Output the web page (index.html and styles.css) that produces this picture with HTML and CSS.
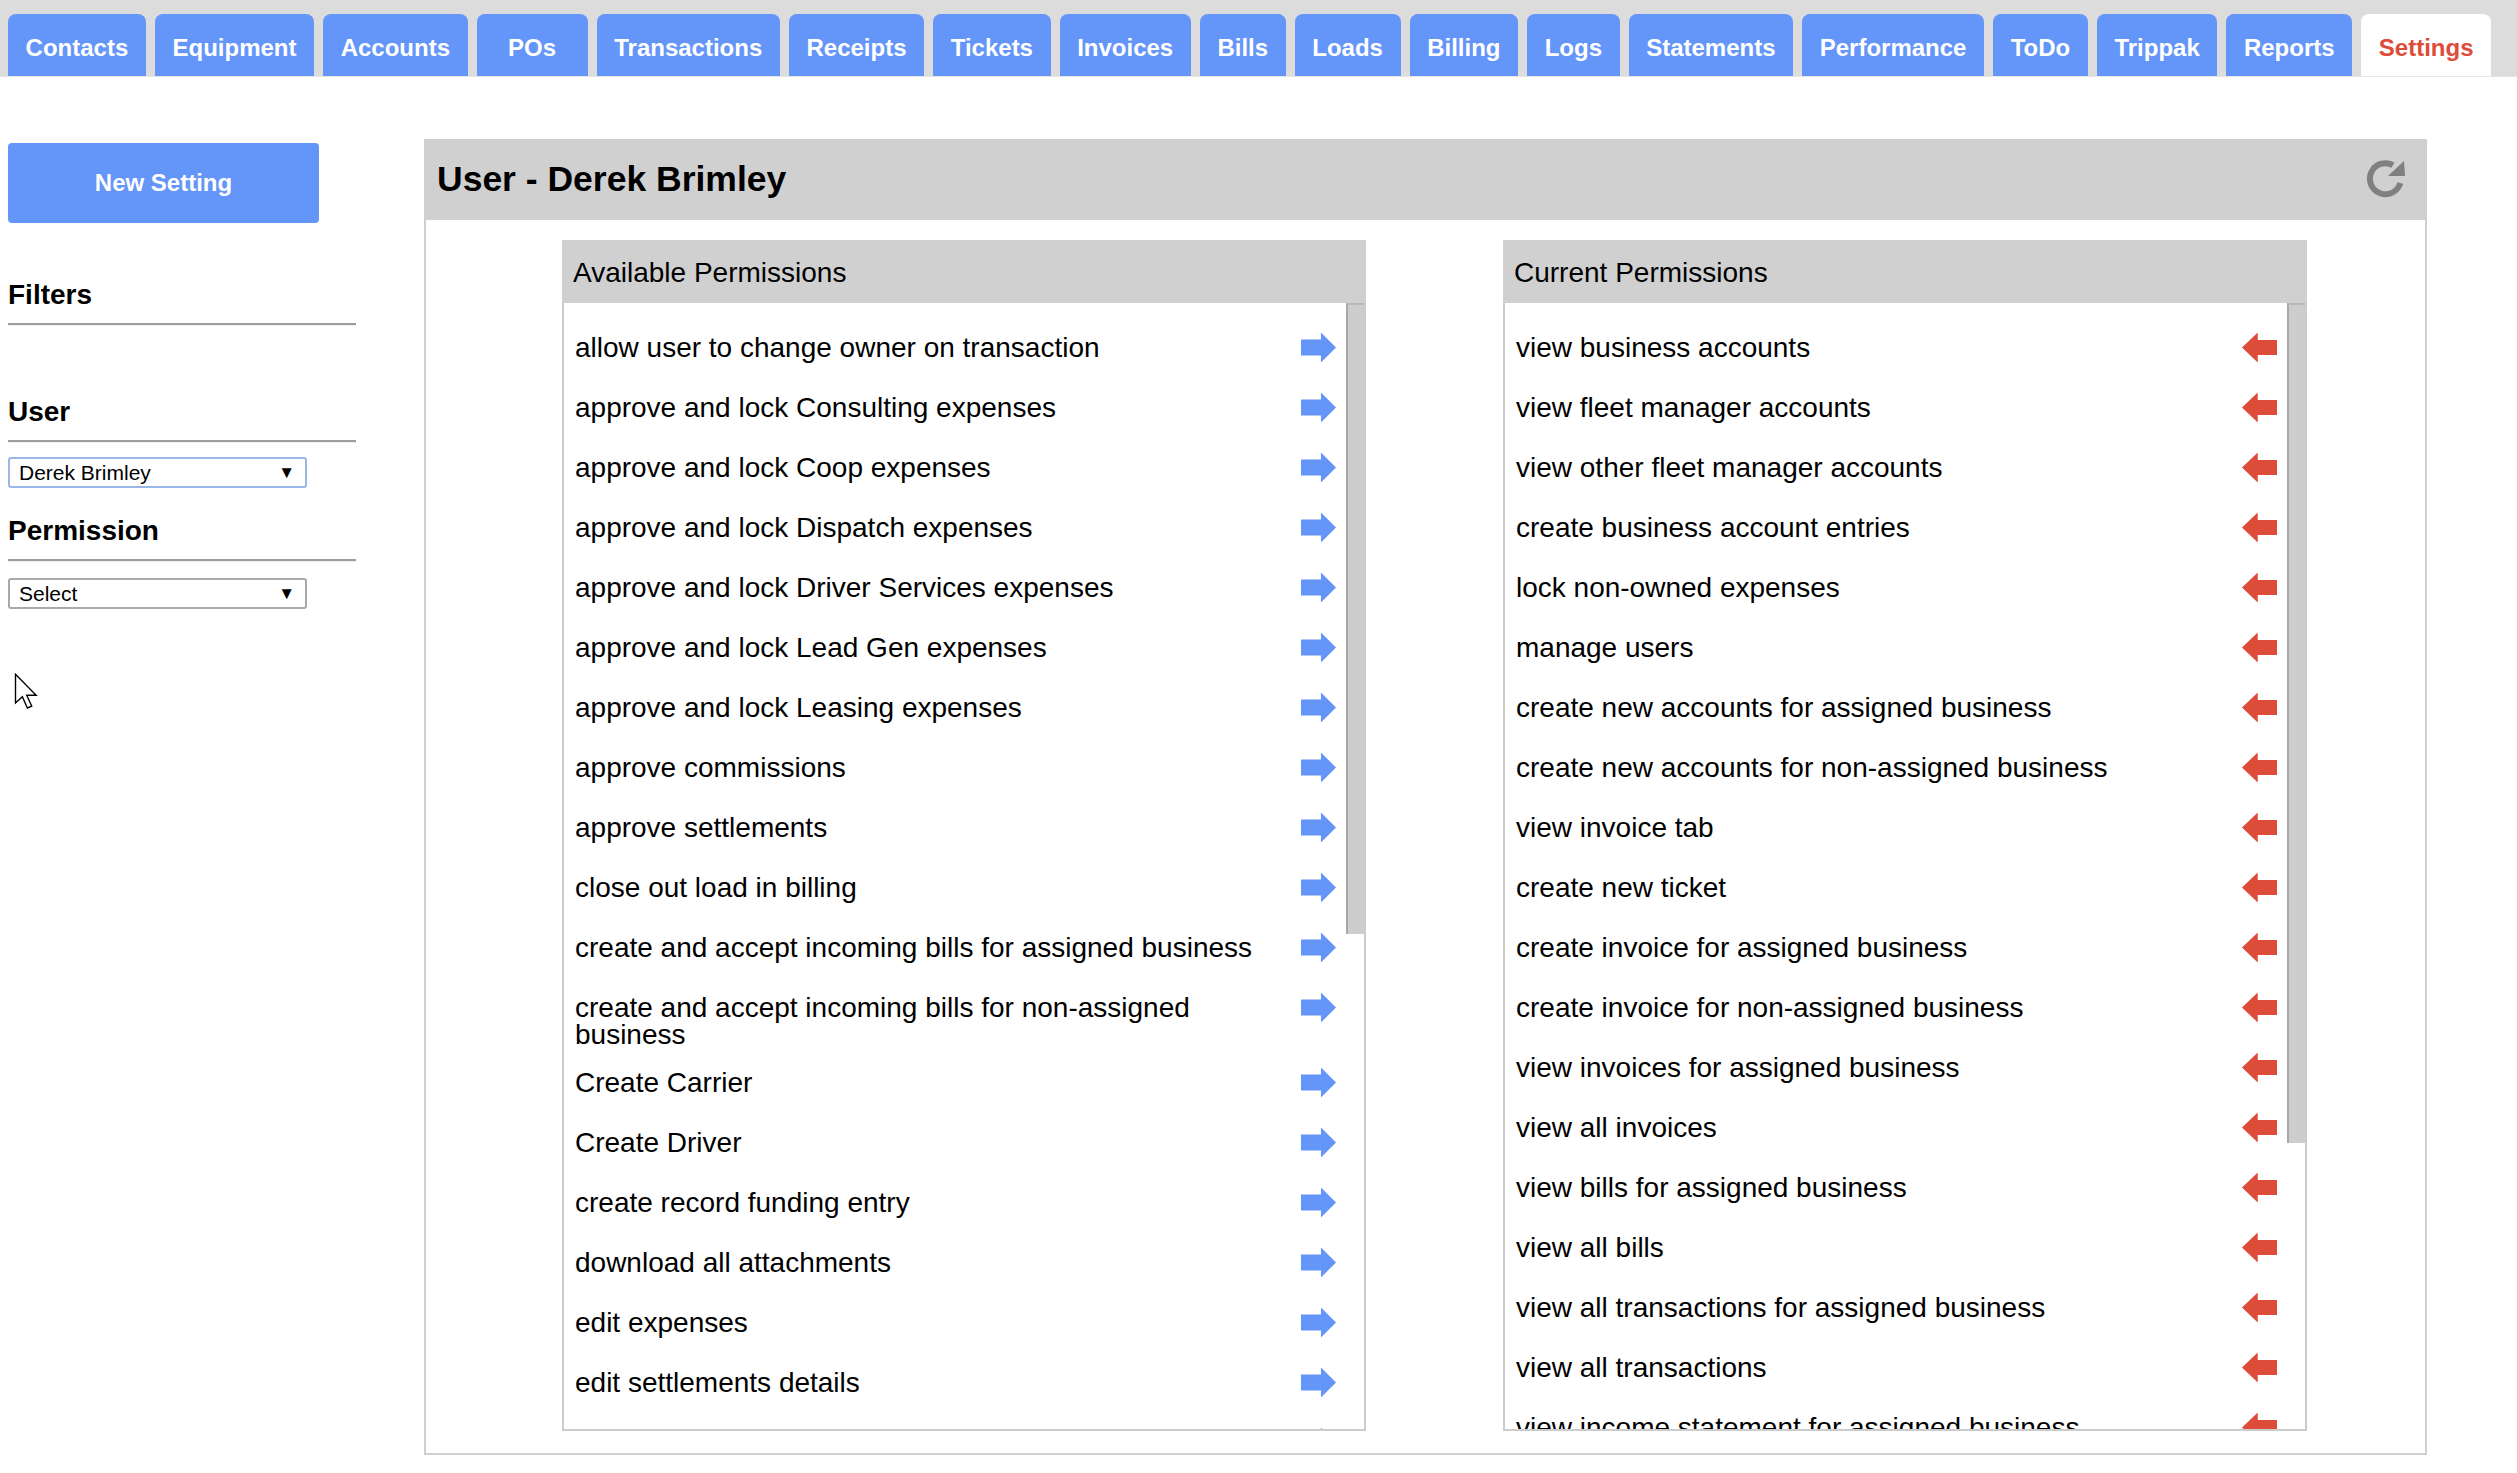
FILE: index.html
```html
<!DOCTYPE html>
<html lang="en">
<head>
<meta charset="utf-8">
<title>Settings</title>
<link rel="stylesheet" href="styles.css">
</head>
<body>
<nav class="tabbar">
  <a class="tab">Contacts</a>
  <a class="tab">Equipment</a>
  <a class="tab">Accounts</a>
  <a class="tab tab-wide">POs</a>
  <a class="tab">Transactions</a>
  <a class="tab">Receipts</a>
  <a class="tab">Tickets</a>
  <a class="tab">Invoices</a>
  <a class="tab">Bills</a>
  <a class="tab">Loads</a>
  <a class="tab">Billing</a>
  <a class="tab">Logs</a>
  <a class="tab">Statements</a>
  <a class="tab">Performance</a>
  <a class="tab">ToDo</a>
  <a class="tab">Trippak</a>
  <a class="tab">Reports</a>
  <a class="tab tab-active">Settings</a>
</nav>

<div class="page">
  <aside class="sidebar">
    <button class="btn-new">New Setting</button>
    <h3 class="side-title side-filters">Filters</h3>
    <hr class="side-rule">
    <h3 class="side-title side-user">User</h3>
    <hr class="side-rule">
    <div class="fake-select fake-select-focus"><span>Derek Brimley</span><span class="caret">&#9660;</span></div>
    <h3 class="side-title side-perm">Permission</h3>
    <hr class="side-rule">
    <div class="fake-select fake-select-2"><span>Select</span><span class="caret">&#9660;</span></div>
  </aside>

  <main class="panel">
    <header class="panel-head">
      <h2 class="panel-title">User - Derek Brimley</h2>
      <svg class="refresh" width="42" height="40" viewBox="0 0 42 40">
        <path d="M29 5.2 A15.5 15.5 0 1 0 36.3 23" fill="none" stroke="#808080" stroke-width="6"/>
        <path d="M24 16 L41 16 L40 1 Z" fill="#808080"/>
      </svg>
    </header>
    <div class="panel-body">
      <section class="perm-box">
        <div class="perm-head">Available Permissions</div>
        <div class="perm-body">
          <div class="perm-list">
            <div class="item"><span class="item-text">allow user to change owner on transaction</span><span class="act"><i class="arrow arrow-add"></i></span></div>
            <div class="item"><span class="item-text">approve and lock Consulting expenses</span><span class="act"><i class="arrow arrow-add"></i></span></div>
            <div class="item"><span class="item-text">approve and lock Coop expenses</span><span class="act"><i class="arrow arrow-add"></i></span></div>
            <div class="item"><span class="item-text">approve and lock Dispatch expenses</span><span class="act"><i class="arrow arrow-add"></i></span></div>
            <div class="item"><span class="item-text">approve and lock Driver Services expenses</span><span class="act"><i class="arrow arrow-add"></i></span></div>
            <div class="item"><span class="item-text">approve and lock Lead Gen expenses</span><span class="act"><i class="arrow arrow-add"></i></span></div>
            <div class="item"><span class="item-text">approve and lock Leasing expenses</span><span class="act"><i class="arrow arrow-add"></i></span></div>
            <div class="item"><span class="item-text">approve commissions</span><span class="act"><i class="arrow arrow-add"></i></span></div>
            <div class="item"><span class="item-text">approve settlements</span><span class="act"><i class="arrow arrow-add"></i></span></div>
            <div class="item"><span class="item-text">close out load in billing</span><span class="act"><i class="arrow arrow-add"></i></span></div>
            <div class="item"><span class="item-text">create and accept incoming bills for assigned business</span><span class="act"><i class="arrow arrow-add"></i></span></div>
            <div class="item"><span class="item-text">create and accept incoming bills for non-assigned business</span><span class="act"><i class="arrow arrow-add"></i></span></div>
            <div class="item"><span class="item-text">Create Carrier</span><span class="act"><i class="arrow arrow-add"></i></span></div>
            <div class="item"><span class="item-text">Create Driver</span><span class="act"><i class="arrow arrow-add"></i></span></div>
            <div class="item"><span class="item-text">create record funding entry</span><span class="act"><i class="arrow arrow-add"></i></span></div>
            <div class="item"><span class="item-text">download all attachments</span><span class="act"><i class="arrow arrow-add"></i></span></div>
            <div class="item"><span class="item-text">edit expenses</span><span class="act"><i class="arrow arrow-add"></i></span></div>
            <div class="item"><span class="item-text">edit settlements details</span><span class="act"><i class="arrow arrow-add"></i></span></div>
            <div class="item"><span class="item-text">export reports</span><span class="act"><i class="arrow arrow-add"></i></span></div>
            <div class="item"><span class="item-text">lock all expenses</span><span class="act"><i class="arrow arrow-add"></i></span></div>
            <div class="item"><span class="item-text">manage business settings</span><span class="act"><i class="arrow arrow-add"></i></span></div>
            <div class="item"><span class="item-text">manage carriers</span><span class="act"><i class="arrow arrow-add"></i></span></div>
          </div>
          <div class="scroll-track"><div class="scroll-thumb" style="height: 631px"></div></div>
        </div>
      </section>

      <section class="perm-box">
        <div class="perm-head">Current Permissions</div>
        <div class="perm-body">
          <div class="perm-list">
            <div class="item"><span class="item-text">view business accounts</span><span class="act"><i class="arrow arrow-remove"></i></span></div>
            <div class="item"><span class="item-text">view fleet manager accounts</span><span class="act"><i class="arrow arrow-remove"></i></span></div>
            <div class="item"><span class="item-text">view other fleet manager accounts</span><span class="act"><i class="arrow arrow-remove"></i></span></div>
            <div class="item"><span class="item-text">create business account entries</span><span class="act"><i class="arrow arrow-remove"></i></span></div>
            <div class="item"><span class="item-text">lock non-owned expenses</span><span class="act"><i class="arrow arrow-remove"></i></span></div>
            <div class="item"><span class="item-text">manage users</span><span class="act"><i class="arrow arrow-remove"></i></span></div>
            <div class="item"><span class="item-text">create new accounts for assigned business</span><span class="act"><i class="arrow arrow-remove"></i></span></div>
            <div class="item"><span class="item-text">create new accounts for non-assigned business</span><span class="act"><i class="arrow arrow-remove"></i></span></div>
            <div class="item"><span class="item-text">view invoice tab</span><span class="act"><i class="arrow arrow-remove"></i></span></div>
            <div class="item"><span class="item-text">create new ticket</span><span class="act"><i class="arrow arrow-remove"></i></span></div>
            <div class="item"><span class="item-text">create invoice for assigned business</span><span class="act"><i class="arrow arrow-remove"></i></span></div>
            <div class="item"><span class="item-text">create invoice for non-assigned business</span><span class="act"><i class="arrow arrow-remove"></i></span></div>
            <div class="item"><span class="item-text">view invoices for assigned business</span><span class="act"><i class="arrow arrow-remove"></i></span></div>
            <div class="item"><span class="item-text">view all invoices</span><span class="act"><i class="arrow arrow-remove"></i></span></div>
            <div class="item"><span class="item-text">view bills for assigned business</span><span class="act"><i class="arrow arrow-remove"></i></span></div>
            <div class="item"><span class="item-text">view all bills</span><span class="act"><i class="arrow arrow-remove"></i></span></div>
            <div class="item"><span class="item-text">view all transactions for assigned business</span><span class="act"><i class="arrow arrow-remove"></i></span></div>
            <div class="item"><span class="item-text">view all transactions</span><span class="act"><i class="arrow arrow-remove"></i></span></div>
            <div class="item"><span class="item-text">view income statement for assigned business</span><span class="act"><i class="arrow arrow-remove"></i></span></div>
            <div class="item"><span class="item-text">view all income statements</span><span class="act"><i class="arrow arrow-remove"></i></span></div>
            <div class="item"><span class="item-text">view receipts for assigned business</span><span class="act"><i class="arrow arrow-remove"></i></span></div>
          </div>
          <div class="scroll-track"><div class="scroll-thumb" style="height: 840px"></div></div>
        </div>
      </section>
    </div>
  </main>
</div>

<svg class="cursor" width="28" height="40" viewBox="0 0 22 32">
  <path d="M1 1 L1 24 L6.5 19 L10.5 28 L14 26.6 L10 17.8 L17.5 17.8 Z" fill="#fff" stroke="#000" stroke-width="1.1" stroke-linejoin="miter"/>
</svg>
</body>
</html>
```

FILE: styles.css
```css
html, body {
  margin: 0;
  padding: 0;
  background: #fff;
}

body {
  font-family: "Liberation Sans", Arial, sans-serif;
  color: #000;
  position: relative;
  min-height: 1473px;
}

/* ---------- tab bar ---------- */
.tabbar {
  display: flex;
  align-items: flex-end;
  gap: 9px;
  height: 77px;
  padding-left: 8px;
  background: #dcdcdc;
  box-sizing: border-box;
  border-bottom: 1px solid #e6e6e6;
}

.tab {
  display: flex;
  align-items: center;
  justify-content: center;
  height: 62px;
  padding: 5px 17.6px 0;
  box-sizing: border-box;
  background: #6495f8;
  color: #fff;
  font-weight: bold;
  font-size: 24px;
  border-radius: 8px 8px 0 0;
  white-space: nowrap;
  cursor: pointer;
}

.tab-wide {
  min-width: 111px;
}

.tab-active {
  background: #fff;
  color: #dd4b39;
}

/* ---------- page ---------- */
.page {
  display: flex;
  align-items: flex-start;
  padding: 62px 0 0 8px;
}

.sidebar {
  width: 348px;
  margin-right: 68px;
  display: flex;
  flex-direction: column;
}

.btn-new {
  width: 311px;
  height: 80px;
  margin-top: 4px;
  border: 0;
  border-radius: 4px;
  background: #6495f8;
  color: #fff;
  font-family: "Liberation Sans", Arial, sans-serif;
  font-weight: bold;
  font-size: 24px;
  cursor: pointer;
}

.side-title {
  margin: 0;
  font-size: 28px;
  line-height: 34px;
  font-weight: bold;
}

.side-filters { margin-top: 55px; }
.side-user { margin-top: 69px; }
.side-perm { margin-top: 26px; }

.side-rule {
  width: 100%;
  height: 0;
  margin: 11px 0 0;
  border: 0;
  border-top: 2px solid #9d9d9d;
  border-bottom: 1px solid #eeeeee;
}

.fake-select {
  display: flex;
  align-items: center;
  justify-content: space-between;
  width: 299px;
  height: 31px;
  margin-top: 14px;
  padding: 0 10px 0 9px;
  box-sizing: border-box;
  border: 2px solid #a9a9a9;
  border-radius: 3px;
  font-size: 21px;
  background: #fff;
}

.fake-select-focus {
  border-color: #9bb7e6;
}

.fake-select-2 {
  margin-top: 16px;
}

.caret {
  font-size: 17px;
}

/* ---------- main panel ---------- */
.panel {
  width: 2003px;
  border: 2px solid #cfcfcf;
  border-top: 0;
  box-sizing: border-box;
}

.panel-head {
  display: flex;
  align-items: center;
  justify-content: space-between;
  height: 81px;
  padding: 0 21px 0 11px;
  background: #d0d0d0;
  margin: 0 -2px;
}

.panel-title {
  margin: 0 0 0 2px;
  font-size: 35.5px;
  font-weight: bold;
}

.refresh {
  display: block;
}

.panel-body {
  display: grid;
  grid-template-columns: 804px 804px;
  column-gap: 137px;
  padding: 20px 0 22px 136px;
}

.perm-box {
  border: 2px solid #cccccc;
  border-top: 0;
}

.perm-head {
  display: flex;
  align-items: center;
  height: 63px;
  padding: 2px 0 0 11px;
  box-sizing: border-box;
  margin: 0 -2px;
  background: #d0d0d0;
  font-size: 28px;
}

.perm-body {
  display: flex;
  height: 1126px;
}

.perm-list {
  flex: 1;
  min-width: 0;
  overflow: hidden;
  padding-top: 15px;
  box-sizing: border-box;
}

.scroll-track {
  width: 18px;
  background: #fff;
}

.scroll-thumb {
  background: #cdcdcd;
  border-left: 2px solid #a8a8a8;
  border-top: 2px solid #b8b8b8;
  box-sizing: border-box;
}

.item {
  display: flex;
  align-items: flex-start;
  min-height: 60px;
  padding: 16px 10px 5px 11px;
  box-sizing: border-box;
  font-size: 28px;
}

.item-text {
  flex: 1;
  line-height: 27px;
  padding-right: 10px;
}

.act {
  display: flex;
  align-items: center;
  height: 27px;
}

.arrow {
  display: block;
  width: 35px;
  height: 30px;
}

.arrow-add {
  background: #6495f8;
  clip-path: polygon(0 23%, 57% 23%, 57% 0, 100% 50%, 57% 100%, 57% 77%, 0 77%);
}

.arrow-remove {
  background: #dd4b39;
  clip-path: polygon(100% 25%, 45% 25%, 45% 0, 0 50%, 45% 100%, 45% 75%, 100% 75%);
}

/* mouse pointer captured in the screenshot */
.cursor {
  position: absolute;
  left: 14px;
  top: 673px;
}
```
